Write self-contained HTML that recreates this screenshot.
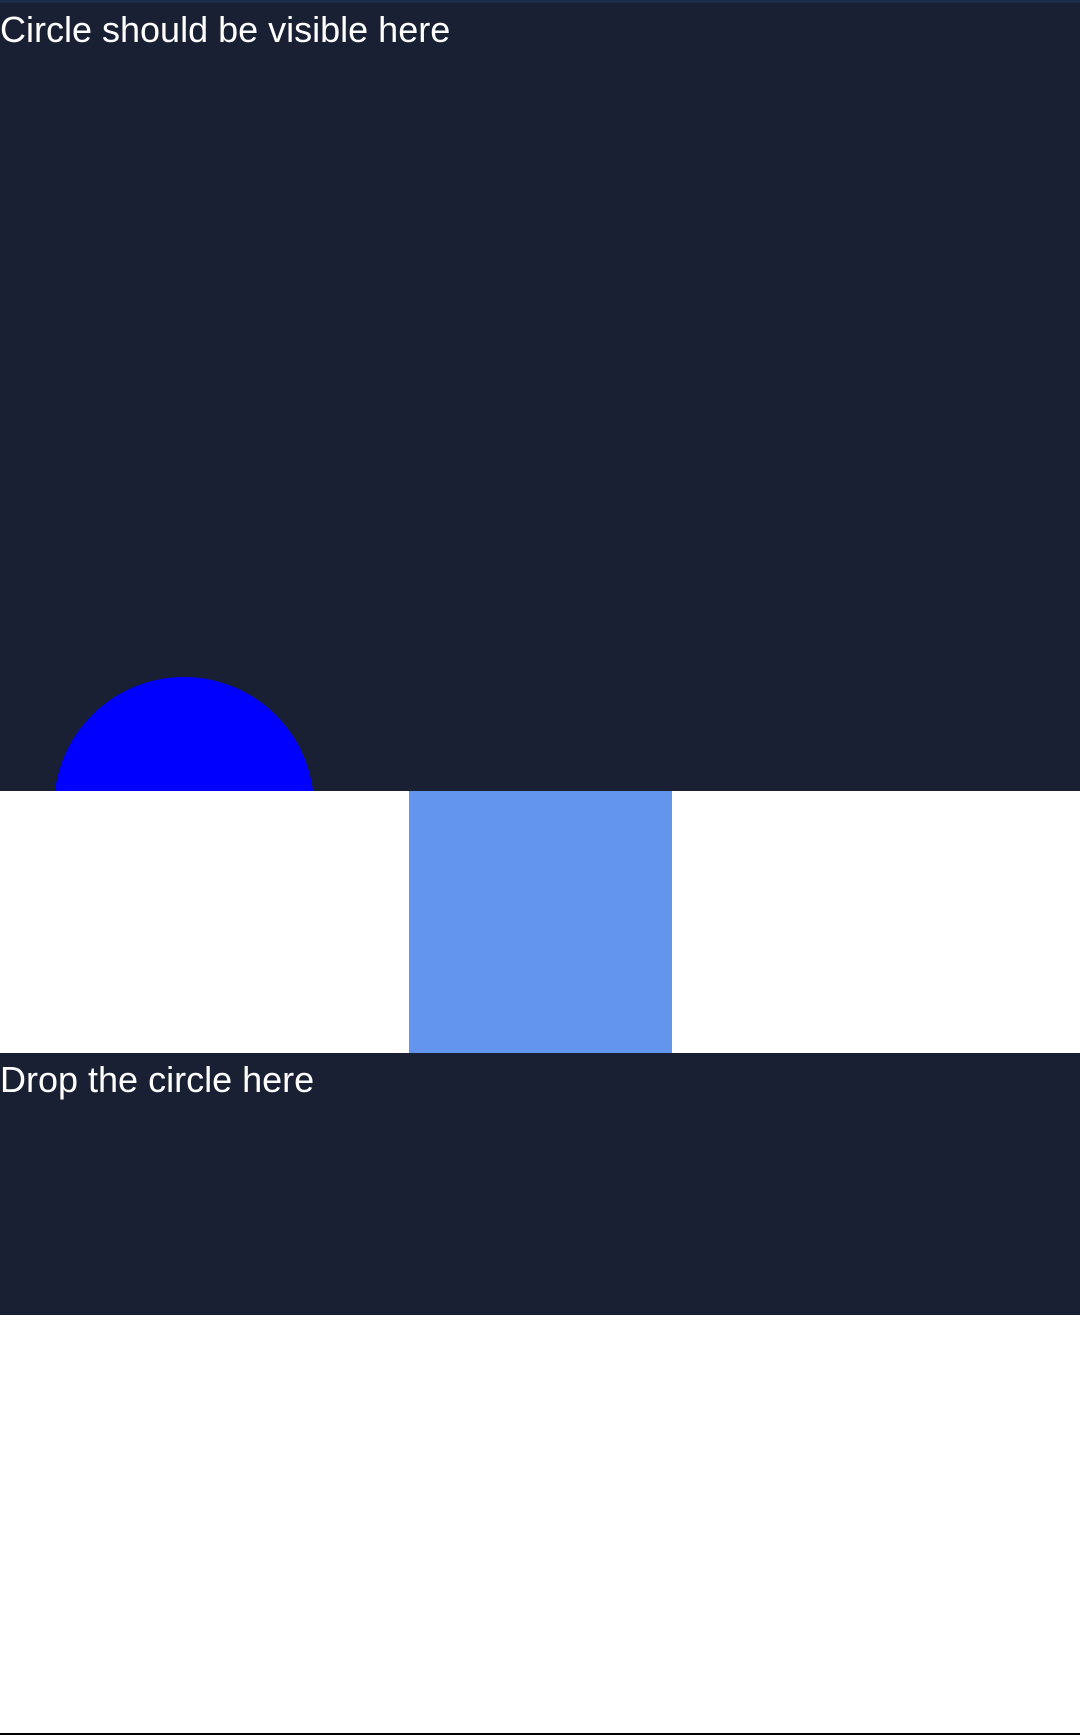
<!DOCTYPE html>
<html><head><style>
html,body{margin:0;padding:0;width:1080px;height:1735px;background:#fff;overflow:hidden;font-family:"Liberation Sans",sans-serif;}
.top{position:absolute;left:0;top:0;width:1080px;height:791px;background:#1a2034;overflow:hidden;}
.strip{position:absolute;left:0;top:0;width:1080px;height:3px;background:#1d2d48;}
.t{position:absolute;left:0;color:#fff;font-size:36px;line-height:40px;}
.circle{position:absolute;left:54px;top:677px;width:260px;height:260px;border-radius:50%;background:#0000ff;}
.sq{position:absolute;left:409px;top:791px;width:263px;height:262px;background:#6495ed;}
.drop{position:absolute;left:0;top:1053px;width:1080px;height:262px;background:#1a2034;}
.line{position:absolute;left:0;top:1733px;width:1080px;height:2px;background:#000;}
</style></head><body>
<div class="top"><div class="strip"></div><div class="t" style="top:10px">Circle should be visible here</div><div class="circle"></div></div>
<div class="sq"></div>
<div class="drop"><div class="t" style="top:7px">Drop the circle here</div></div>
<div class="line"></div>
</body></html>
